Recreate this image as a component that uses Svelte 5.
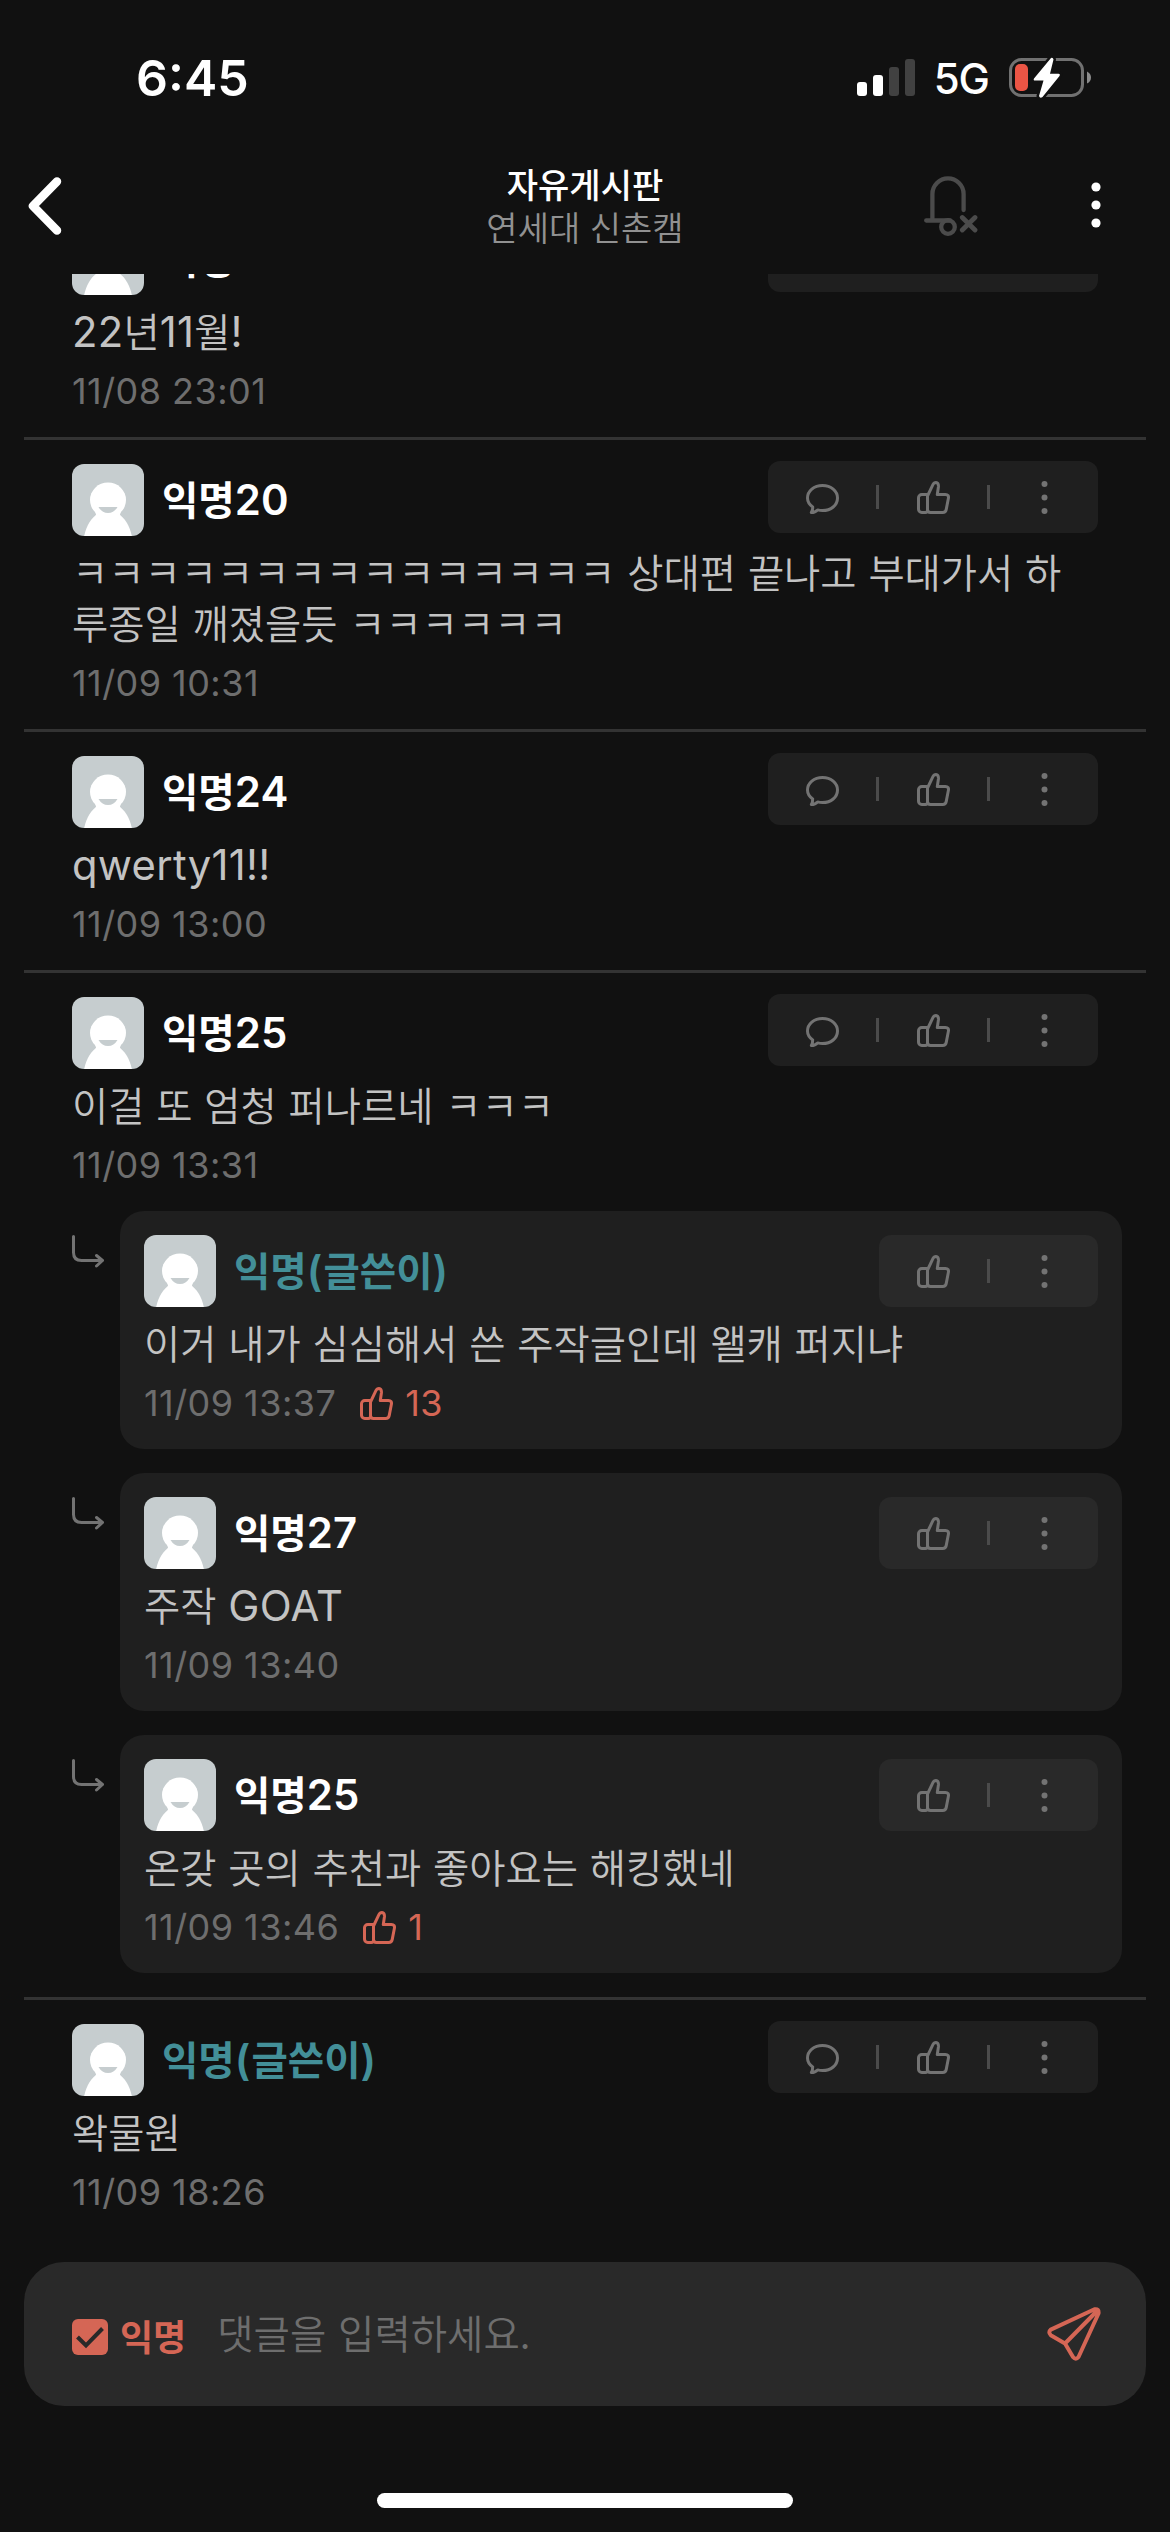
<script>
	const comments = [
		{ name: "익명19", text: ["22년11월!"], time: "11/08 23:01" },
		{ name: "익명20", text: ["ㅋㅋㅋㅋㅋㅋㅋㅋㅋㅋㅋㅋㅋㅋㅋ 상대편 끝나고 부대가서 하", "루종일 깨졌을듯 ㅋㅋㅋㅋㅋㅋ"], time: "11/09 10:31" },
		{ name: "익명24", text: ["qwerty11!!"], time: "11/09 13:00" },
		{
			name: "익명25",
			text: ["이걸 또 엄청 퍼나르네 ㅋㅋㅋ"],
			time: "11/09 13:31",
			replies: [
				{ name: "익명(글쓴이)", writer: true, text: ["이거 내가 심심해서 쓴 주작글인데 왤캐 퍼지냐"], time: "11/09 13:37", likes: 13 },
				{ name: "익명27", text: ["주작 GOAT"], time: "11/09 13:40" },
				{ name: "익명25", text: ["온갖 곳의 추천과 좋아요는 해킹했네"], time: "11/09 13:46", likes: 1 },
			],
		},
		{ name: "익명(글쓴이)", writer: true, text: ["왁물원"], time: "11/09 18:26" },
	];

	// latin runs are set in their own font, a bit larger than the hangul
	function runs(text) {
		return text.split(/([!-~]+)/).filter((t) => t != "");
	}
	function isLatin(run) {
		return /^[!-~]/.test(run);
	}
</script>

{#snippet mixed(text)}{#each runs(text) as run}{#if isLatin(run)}<span class="latin">{run}</span>{:else}{run}{/if}{/each}{/snippet}

{#snippet thumb()}
	<svg class="thumb" width="33" height="33" viewBox="0 0 33 33">
		<path d="M10.5 13.5H4.8a3.3 3.3 0 0 0-3.3 3.3v11.4a3.3 3.3 0 0 0 3.3 3.3h3.6q2.1 0 2.1-2.2" />
		<path d="M10.5 15L15.9 3.6Q16.9 1.5 19 1.5Q21.8 1.8 21.4 6L20.3 13.5H28.4Q32.1 13.7 31.4 17.2L29.2 28.6Q28.6 31.5 25.7 31.5H13.4Q10.5 31.5 10.5 28.6Z" />
	</svg>
{/snippet}

{#snippet actions(isReply)}
	<div class="actions">
		{#if !isReply}
			<div class="action">
				<svg width="33" height="33" viewBox="0 0 33 33">
					<path d="M16.5 4.5C8 4.5 1.5 10 1.500 17C1.500 21 3.700 23.800 6.700 25.900Q6.800 29 5.300 31.500Q9.200 31.500 11.600 28.900Q14 29.600 16.500 29.600C25 29.600 31.500 24.200 31.500 17C31.500 10 25 4.500 16.500 4.500Z" />
				</svg>
			</div>
			<i class="bar"></i>
		{/if}
		<div class="action">{@render thumb()}</div>
		<i class="bar"></i>
		<div class="action">
			<svg class="dots" width="7" height="33" viewBox="0 0 7 33">
				<circle cx="3.5" cy="3" r="3" /><circle cx="3.5" cy="16.5" r="3" /><circle cx="3.5" cy="30" r="3" />
			</svg>
		</div>
	</div>
{/snippet}

{#snippet entry(item, isReply)}
	<div class="head">
		<svg class="avatar" width="72" height="72" viewBox="0 0 72 72">
			<rect width="72" height="72" fill="#c6cdcf" />
			<path d="M12 73C14 62 19 54 26 49.500H46C53 54 58 62 60 73Z" fill="#fff" />
			<ellipse cx="36" cy="36" rx="18" ry="17.500" fill="#fff" />
			<path d="M22 44Q26 52 36 52T50 44L47 54H25Z" fill="#fff" />
			<path d="M26.500 43H45.500Q42 49 36 49T26.500 43Z" fill="#c6cdcf" />
		</svg>
		<span class="name" class:writer={item.writer}>{@render mixed(item.name)}</span>
		{@render actions(isReply)}
	</div>
	<div class="text">
		{#each item.text as line}
			<div>{@render mixed(line)}</div>
		{/each}
	</div>
	<div class="meta">
		<span>{item.time}</span>
		{#if item.likes}
			<span class="likes">{@render thumb()}{item.likes}</span>
		{/if}
	</div>
{/snippet}

<div class="screen">
	<div class="status">
		<span class="clock">6:45</span>
		<svg class="signal" width="58" height="38" viewBox="0 0 58 38">
			<rect x="0" y="23" width="10" height="14" rx="3" fill="#fff" />
			<rect x="16" y="16" width="10" height="21" rx="3" fill="#fff" />
			<rect x="32" y="8" width="10" height="29" rx="3" fill="#414141" />
			<rect x="48" y="0" width="10" height="37" rx="3" fill="#414141" />
		</svg>
		<span class="network">5G</span>
		<svg class="battery" width="83" height="42" viewBox="0 0 83 42">
			<rect x="1.500" y="2.500" width="72" height="36" rx="11" fill="none" stroke="#717171" stroke-width="3" />
			<path d="M78 14.500Q82 16.500 82 20.500T78 26.500Z" fill="#8b8b8b" />
			<rect x="6" y="7" width="13" height="27" rx="5" fill="#eb5545" />
			<path d="M42 1L25 21.500Q24 23.500 26 23.500H34.500L30 39Q31 42 33.500 40L50.500 19Q51.500 16.800 49.500 16.800H41L44.500 2.500Q44 .2 42 1Z" fill="#fff" stroke="#111" stroke-width="5" paint-order="stroke" />
		</svg>
	</div>

	<div class="nav">
		<svg class="back" width="34" height="58" viewBox="0 0 34 58">
			<path d="M29 4.500L5 29L29 53.500" fill="none" stroke="#fff" stroke-width="8.500" stroke-linecap="round" stroke-linejoin="round" />
		</svg>
		<div class="title">
			<b>자유게시판</b>
			<span>연세대 신촌캠</span>
		</div>
		<svg class="bell" width="54" height="61" viewBox="0 0 54 61">
			<g fill="none" stroke="#4b4b4b" stroke-width="4.300" stroke-linecap="round">
				<path d="M2.200 44.500H26M8.400 44V18a15.600 15.600 0 0 1 31.200 0V34" />
				<circle cx="24" cy="51" r="6.800" />
				<path d="M38.300 41.500L51 54M51 41.500L38.300 54" stroke-width="4.800" />
			</g>
		</svg>
		<svg class="more" width="10" height="46" viewBox="0 0 10 46">
			<circle cx="5" cy="5" r="4.600" /><circle cx="5" cy="23" r="4.600" /><circle cx="5" cy="41" r="4.600" />
		</svg>
	</div>

	<div class="feed">
		<div class="list">
			{#each comments as comment}
				<div class="comment">
					{@render entry(comment, false)}
					{#if comment.replies}
						<div class="replies">
							{#each comment.replies as reply}
								<div class="reply">
									<svg class="arrow" width="33" height="33" viewBox="0 0 33 33">
										<path d="M1.500 1.500V17.500Q1.500 25.500 9.500 25.500H30M24.500 20.500L30.500 25.500L24.500 31" />
									</svg>
									<div class="card">{@render entry(reply, true)}</div>
								</div>
							{/each}
						</div>
					{/if}
				</div>
			{/each}
		</div>
	</div>

	<div class="write">
		<svg width="36" height="36" viewBox="0 0 36 36">
			<rect width="36" height="36" rx="6" fill="#d56655" />
			<path d="M5.500 18L14 26.500L30.500 9.500" fill="none" stroke="#292929" stroke-width="4" />
		</svg>
		<b>익명</b>
		<span class="placeholder">댓글을 입력하세요.</span>
		<svg class="send" width="54" height="54" viewBox="0 0 54 54">
			<path d="M47.500 2.300L3.800 22.600Q.8 25 3.800 28.200L18 36.500L26 50Q28.800 53.300 31.500 50L51.500 6.500Q52.200 1.600 47.500 2.300ZM18 36.500L50.500 3.500" fill="none" stroke="#d56655" stroke-width="4" stroke-linejoin="round" />
		</svg>
	</div>
	<div class="home"></div>
</div>

<style>
	:global(body) {
		margin: 0;
		background: #111;
	}
	.screen {
		width: 1170px;
		height: 2532px;
		display: flex;
		flex-direction: column;
		overflow: hidden;
		background: #111;
		color: #fff;
		font-family: "Noto Sans CJK KR", sans-serif;
	}
	svg {
		display: block;
		flex: none;
	}
	.latin {
		font-family: Inter, sans-serif;
		font-size: 1.06em;
		line-height: 1;
		letter-spacing: 0.3px;
	}
	.status {
		height: 156px;
		display: flex;
		align-items: center;
		box-sizing: border-box;
		padding: 0 78px 0 136px;
		font-family: Inter, sans-serif;
	}
	.clock {
		font-size: 50px;
		font-weight: 600;
	}
	.signal {
		margin-left: auto;
	}
	.network {
		margin: 0 20px 0 19px;
		font-size: 42px;
		font-weight: 500;
		letter-spacing: -1px;
	}
	.nav {
		height: 118px;
		display: flex;
		align-items: center;
		box-sizing: border-box;
		padding: 0 69px 18px 28px;
	}
	.title {
		width: 400px;
		margin: -3px 0 0 323px;
		display: flex;
		flex-direction: column;
		align-items: center;
		font-size: 34px;
		line-height: 43px;
	}
	.title b {
		font-weight: 500;
	}
	.title span {
		color: #919191;
		font-weight: 350;
		word-spacing: 2px;
	}
	.bell {
		margin-left: 139px;
	}
	.more {
		margin: -2px 0 0 auto;
		fill: #fff;
	}
	.feed {
		height: 1966px;
		overflow: hidden;
	}
	.list {
		margin-top: -75px;
	}
	.comment {
		margin: 0 24px;
		padding: 24px 48px;
		border-bottom: 3px solid #333;
	}
	.comment:last-child {
		border-bottom: 0;
	}
	.head {
		display: flex;
		height: 72px;
	}
	.avatar {
		border-radius: 12px;
	}
	.name {
		margin-left: 18px;
		font-size: 39.5px;
		font-weight: 700;
		line-height: 67px;
	}
	.name .latin {
		font-weight: 600;
	}
	.writer {
		color: #438f98;
	}
	.writer .latin {
		letter-spacing: 1.2px;
	}
	.actions {
		display: flex;
		align-items: center;
		margin: -3px 0 3px auto;
		border-radius: 12px;
		background: #1f1f1f;
	}
	.card .actions {
		margin: 0 0 0 auto;
		background: #292929;
	}
	.action {
		width: 108px;
		display: flex;
		justify-content: center;
	}
	.action svg, .thumb, .arrow {
		fill: none;
		stroke: #737373;
		stroke-width: 3;
		stroke-linejoin: round;
		stroke-linecap: round;
	}
	.action .dots {
		fill: #737373;
		stroke: none;
	}
	.bar {
		width: 3px;
		height: 24px;
		background: #4b4b4b;
	}
	.text {
		margin-top: 9px;
		color: #c3c3c3;
		font-size: 39.4px;
		font-weight: 350;
		line-height: 51px;
		word-spacing: 3px;
		white-space: nowrap;
	}
	.text .latin {
		font-weight: 400;
	}
	.text div {
		height: 51px;
	}
	.meta {
		display: flex;
		align-items: center;
		height: 44px;
		margin-top: 14px;
		color: #6e6e6e;
		font-family: Inter, sans-serif;
		font-size: 36px;
		letter-spacing: 0.45px;
	}
	.likes {
		display: flex;
		align-items: center;
		gap: 12px;
		margin-left: 24px;
		color: #d56655;
	}
	.likes .thumb {
		stroke: #d56655;
	}
	.replies {
		display: flex;
		flex-direction: column;
		gap: 24px;
		margin: 24px -24px 0 0;
	}
	.reply {
		display: flex;
	}
	.arrow {
		margin: 24px 15px 0 0;
	}
	.card {
		flex: 1;
		padding: 24px;
		border-radius: 24px;
		background: #1f1f1f;
	}
	.write {
		display: flex;
		align-items: center;
		height: 144px;
		box-sizing: border-box;
		margin: 22px 24px 87px;
		padding: 6px 45px 0 48px;
		border-radius: 40px;
		background: #292929;
	}
	.write b {
		margin: -5px 0 0 12px;
		color: #d56655;
		font-size: 36px;
	}
	.placeholder {
		margin: -11px auto 0 31px;
		color: #6e6e6e;
		font-size: 39.5px;
		font-weight: 350;
		word-spacing: 3px;
	}
	.send {
		margin-top: -6px;
	}
	.home {
		width: 416px;
		height: 15px;
		margin: 0 auto;
		border-radius: 8px;
		background: #fff;
	}
</style>
